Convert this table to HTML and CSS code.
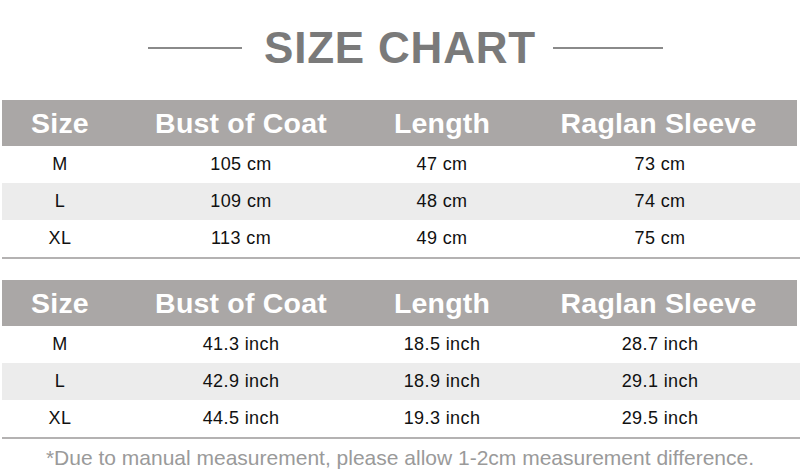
FILE: index.html
```html
<!DOCTYPE html>
<html>
<head>
<meta charset="utf-8">
<link rel="stylesheet" href="styles.css">
</head>
<body>
<div class="page">
  <div class="title">
    <span class="rule rule-left"></span>
    <h1>SIZE CHART</h1>
    <span class="rule rule-right"></span>
  </div>

  <div class="table">
    <div class="row head"><span>Size</span><span>Bust of Coat</span><span>Length</span><span>Raglan Sleeve</span></div>
    <div class="row"><span>M</span><span>105 cm</span><span>47 cm</span><span>73 cm</span></div>
    <div class="row alt"><span>L</span><span>109 cm</span><span>48 cm</span><span>74 cm</span></div>
    <div class="row"><span>XL</span><span>113 cm</span><span>49 cm</span><span>75 cm</span></div>
  </div>

  <div class="table second">
    <div class="row head"><span>Size</span><span>Bust of Coat</span><span>Length</span><span>Raglan Sleeve</span></div>
    <div class="row"><span>M</span><span>41.3 inch</span><span>18.5 inch</span><span>28.7 inch</span></div>
    <div class="row alt"><span>L</span><span>42.9 inch</span><span>18.9 inch</span><span>29.1 inch</span></div>
    <div class="row"><span>XL</span><span>44.5 inch</span><span>19.3 inch</span><span>29.5 inch</span></div>
  </div>

  <p class="note">*Due to manual measurement, please allow 1-2cm measurement difference.</p>
</div>
</body>
</html>
```

FILE: styles.css
```css
html, body {
  margin: 0;
  padding: 0;
  background: #ffffff;
}

.page {
  width: 800px;
  height: 476px;
  font-family: "Liberation Sans", Arial, sans-serif;
  overflow: hidden;
}

.title {
  height: 96px;
  display: flex;
  align-items: center;
  justify-content: center;
  padding-left: 11px;
  margin-bottom: 4px;
}

.title h1 {
  margin: 0 17px 0 22px;
  font-size: 44px;
  letter-spacing: 0.8px;
  font-weight: bold;
  color: #7a7a7a;
  line-height: 1;
}

.rule {
  display: block;
  height: 2px;
  background: #8a8a8a;
}

.rule-left { width: 94px; }
.rule-right { width: 110px; }

.table {
  margin-left: 2px;
  border-bottom: 2px solid #b4b2b2;
}

.table.second {
  margin-top: 21px;
}

.row {
  display: grid;
  grid-template-columns: 116px 246px 156px 1fr;
  height: 37px;
  align-items: center;
  font-size: 18px;
  letter-spacing: 0.4px;
  color: #111111;
}

.row span {
  text-align: center;
}

.row.alt {
  background: #ececec;
}

.row.head {
  height: 46px;
  background: #aaa7a6;
  color: #ffffff;
  font-size: 28.5px;
  font-weight: bold;
  letter-spacing: 0.2px;
  margin-right: 3px;
}

.note {
  margin: 7px 0 0;
  text-align: center;
  font-size: 21px;
  line-height: 24px;
  color: #9a9a9a;
}
```
